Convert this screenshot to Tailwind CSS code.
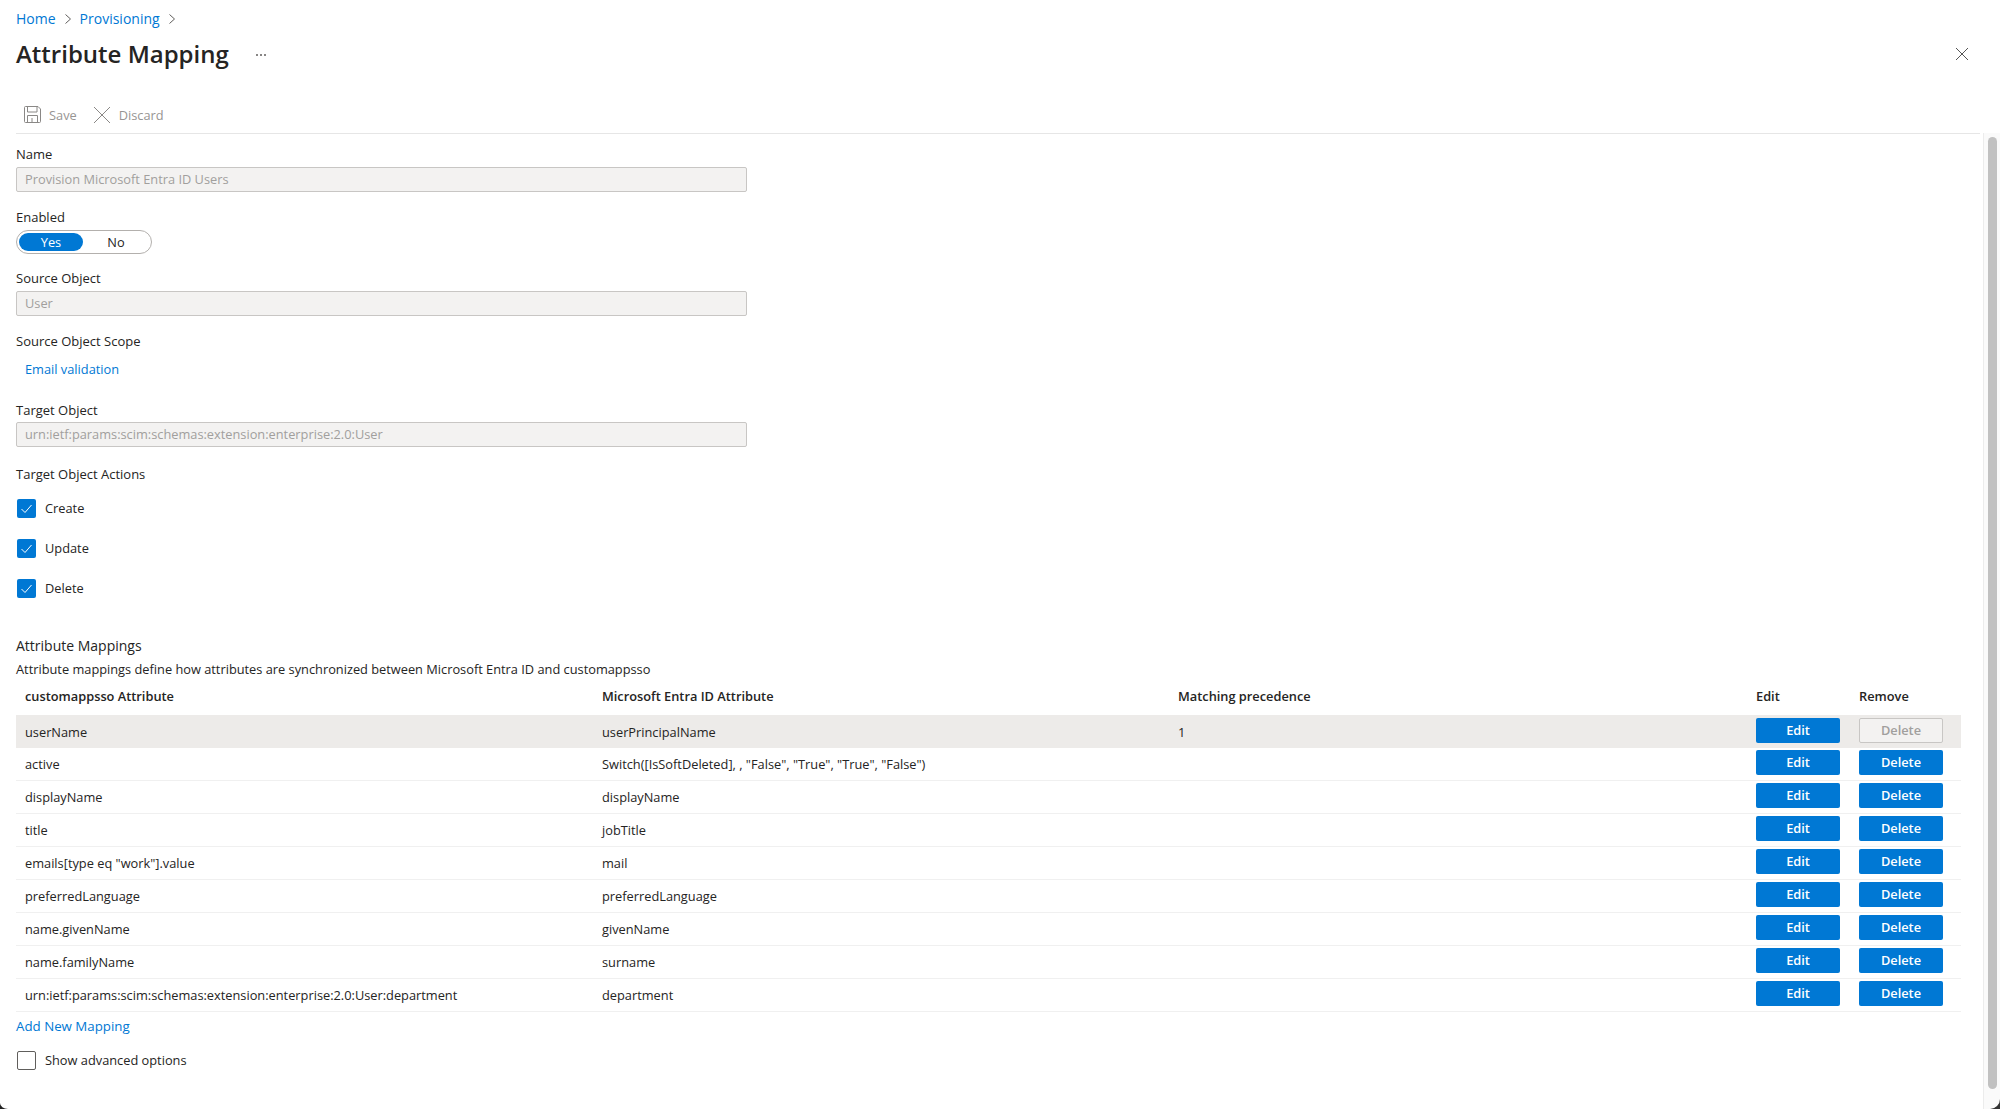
<!DOCTYPE html>
<html><head><meta charset="utf-8"><script src="https://cdn.jsdelivr.net/npm/@tailwindcss/browser@4"></script></head>
<body class="bg-white">
<div class="relative w-[2000px] h-[1109px] overflow-hidden bg-white text-[#252423] text-[12.8px] leading-[20px] font-['Open_Sans','Noto_Sans',sans-serif]">
  <div class="absolute right-0 top-[133px] bottom-0 w-[17px] bg-[#fafafa] border-l border-[#ececec]"><div class="absolute left-[4px] top-[4px] bottom-[20px] w-[9px] rounded-full bg-[#c1c1c1]"></div></div>
  <svg class="absolute right-0 bottom-0" width="12" height="12" viewBox="0 0 12 12"><path d="M12 2A10 10 0 0 1 2 12H12z" fill="#333"/></svg>
  <svg class="absolute left-0 bottom-0" width="8" height="6" viewBox="0 0 8 6"><path d="M0 0A8 6 0 0 0 8 6H0z" fill="#222"/></svg>
  <div class="px-4">
    <div class="flex items-center h-[20px] mt-[9px] text-[#0078d4] text-[14px]">
      <span>Home</span>
      <svg class="mx-[8px]" width="8" height="12" viewBox="0 0 8 12" fill="none" stroke="#605e5c"><path d="M1.5 1.5 6.5 6 1.5 10.500"/></svg>
      <span>Provisioning</span>
      <svg class="mx-[8px]" width="8" height="12" viewBox="0 0 8 12" fill="none" stroke="#605e5c"><path d="M1.5 1.5 6.5 6 1.500 10.500"/></svg>
    </div>
    <div class="flex items-center h-[34px] mt-[8px]">
      <h1 class="text-[24px] leading-[34px] font-semibold text-[#252423]">Attribute Mapping</h1>
      <span class="ml-[27px] flex gap-[2px] mt-[1px]"><i class="w-[2px] h-[2px] bg-[#605e5c] rounded-full"></i><i class="w-[2px] h-[2px] bg-[#605e5c] rounded-full"></i><i class="w-[2px] h-[2px] bg-[#605e5c] rounded-full"></i></span>
      <svg class="ml-auto mr-[15px]" width="14" height="14" viewBox="0 0 14 14" stroke="#555" stroke-width="1"><path d="M1 1 13 13M13 1 1 13"/></svg>
    </div>
  </div>
  <div class="ml-4 mr-[20px] mt-[27px] h-[36px] pt-[5px] pb-[7px] border-b border-[#e6e6e6] flex items-center text-[#979593]">
    <svg class="ml-[8px]" width="17" height="17" viewBox="0 0 17 17" fill="none" stroke="#8a8886"><path d="M.5 1.500a1 1 0 0 1 1-1h12.500l2.500 2.500v12.500a1 1 0 0 1-1 1h-14a1 1 0 0 1-1-1z"/><path d="M3.500.5v5.500h9.500v-5.500M3.500 16.500v-7h10v7M8 12v4.500"/></svg>
    <span class="ml-[8px]">Save</span>
    <svg class="ml-[16px]" width="18" height="18" viewBox="0 0 18 18" stroke="#8a8886"><path d="M1 1 17 17M17 1 1 17"/></svg>
    <span class="ml-[8px]">Discard</span>
  </div>
  <div class="px-4">
    <div class="mt-[10px] h-[20px] text-[13px]">Name</div>
    <div class="mt-[3px] w-[731px] h-[25px] rounded-[2px] border border-[#c8c6c4] bg-[#f3f2f1] px-[8px] text-[#a19f9d] leading-[23px]">Provision Microsoft Entra ID Users</div>
    <div class="mt-[15px] h-[20px] text-[13px]">Enabled</div>
    <div class="mt-[3px] w-[136px] h-[24px] rounded-full border border-[#b3b0ad] p-[2px] flex items-center">
      <span class="w-[64px] h-[18px] rounded-full bg-[#0078d4] text-white text-center leading-[18px]">Yes</span>
      <span class="w-[66px] text-center leading-[18px]">No</span>
    </div>
    <div class="mt-[14px] h-[20px] text-[13px]">Source Object</div>
    <div class="mt-[3px] w-[731px] h-[25px] rounded-[2px] border border-[#c8c6c4] bg-[#f3f2f1] px-[8px] text-[#a19f9d] leading-[23px]">User</div>
    <div class="mt-[15px] h-[20px] text-[13px]">Source Object Scope</div>
    <div class="mt-[8px] h-[20px] pl-[9px] text-[#0078d4]">Email validation</div>
    <div class="mt-[21px] h-[20px] text-[13px]">Target Object</div>
    <div class="mt-[2px] w-[731px] h-[25px] rounded-[2px] border border-[#c8c6c4] bg-[#f3f2f1] px-[8px] text-[#a19f9d] leading-[23px]">urn:ietf:params:scim:schemas:extension:enterprise:2.0:User</div>
    <div class="mt-[17px] h-[20px] text-[13px]">Target Object Actions</div>
    <div class="mt-[14px] h-[20px] flex items-center gap-[9px] pl-[1px]"><span class="w-[19px] h-[19px] mt-[1px] rounded-[2px] bg-[#0078d4] flex items-center justify-center"><svg width="13" height="13" viewBox="0 0 13 13" fill="none" stroke="#fff"><path d="M1.500 7 5 10.500 11.500 3"/></svg></span><span>Create</span></div>
    <div class="mt-[20px] h-[20px] flex items-center gap-[9px] pl-[1px]"><span class="w-[19px] h-[19px] mt-[1px] rounded-[2px] bg-[#0078d4] flex items-center justify-center"><svg width="13" height="13" viewBox="0 0 13 13" fill="none" stroke="#fff"><path d="M1.500 7 5 10.500 11.500 3"/></svg></span><span>Update</span></div>
    <div class="mt-[20px] h-[20px] flex items-center gap-[9px] pl-[1px]"><span class="w-[19px] h-[19px] mt-[1px] rounded-[2px] bg-[#0078d4] flex items-center justify-center"><svg width="13" height="13" viewBox="0 0 13 13" fill="none" stroke="#fff"><path d="M1.500 7 5 10.500 11.500 3"/></svg></span><span>Delete</span></div>
    <div class="mt-[38px] h-[20px] text-[14px]">Attribute Mappings</div>
    <div class="mt-[3px] h-[20px]">Attribute mappings define how attributes are synchronized between Microsoft Entra ID and customappsso</div>
    <div class="w-[1945px] mt-[7px]">
      <div class="grid grid-cols-[577px_576px_578px_103px_1fr] pl-[9px] h-[20px] font-semibold">
        <span>customappsso Attribute</span><span>Microsoft Entra ID Attribute</span><span>Matching precedence</span><span>Edit</span><span>Remove</span>
      </div>
      <div class="mt-[9px] grid grid-cols-[577px_576px_578px_103px_1fr] items-center pl-[9px] h-[33px] bg-[#edebe9]">
        <span>userName</span><span>userPrincipalName</span><span>1</span>
        <span class="w-[84px] h-[25px] -mt-[3px] rounded-[2px] bg-[#0078d4] text-white font-semibold text-center leading-[25px]">Edit</span>
        <span class="w-[84px] h-[25px] -mt-[3px] rounded-[2px] border border-[#c8c6c4] bg-[#f3f2f1] text-[#a19f9d] font-semibold text-center leading-[23px]">Delete</span>
      </div>
      <div class="grid grid-cols-[577px_576px_578px_103px_1fr] items-center pl-[9px] h-[33px] border-b border-[#f0f0f0]">
        <span>active</span><span>Switch([IsSoftDeleted], , "False", "True", "True", "False")</span><span></span>
        <span class="w-[84px] h-[25px] -mt-[3px] rounded-[2px] bg-[#0078d4] text-white font-semibold text-center leading-[25px]">Edit</span>
        <span class="w-[84px] h-[25px] -mt-[3px] rounded-[2px] bg-[#0078d4] text-white font-semibold text-center leading-[25px]">Delete</span>
      </div>
      <div class="grid grid-cols-[577px_576px_578px_103px_1fr] items-center pl-[9px] h-[33px] border-b border-[#f0f0f0]">
        <span>displayName</span><span>displayName</span><span></span>
        <span class="w-[84px] h-[25px] -mt-[3px] rounded-[2px] bg-[#0078d4] text-white font-semibold text-center leading-[25px]">Edit</span>
        <span class="w-[84px] h-[25px] -mt-[3px] rounded-[2px] bg-[#0078d4] text-white font-semibold text-center leading-[25px]">Delete</span>
      </div>
      <div class="grid grid-cols-[577px_576px_578px_103px_1fr] items-center pl-[9px] h-[33px] border-b border-[#f0f0f0]">
        <span>title</span><span>jobTitle</span><span></span>
        <span class="w-[84px] h-[25px] -mt-[3px] rounded-[2px] bg-[#0078d4] text-white font-semibold text-center leading-[25px]">Edit</span>
        <span class="w-[84px] h-[25px] -mt-[3px] rounded-[2px] bg-[#0078d4] text-white font-semibold text-center leading-[25px]">Delete</span>
      </div>
      <div class="grid grid-cols-[577px_576px_578px_103px_1fr] items-center pl-[9px] h-[33px] border-b border-[#f0f0f0]">
        <span>emails[type eq "work"].value</span><span>mail</span><span></span>
        <span class="w-[84px] h-[25px] -mt-[3px] rounded-[2px] bg-[#0078d4] text-white font-semibold text-center leading-[25px]">Edit</span>
        <span class="w-[84px] h-[25px] -mt-[3px] rounded-[2px] bg-[#0078d4] text-white font-semibold text-center leading-[25px]">Delete</span>
      </div>
      <div class="grid grid-cols-[577px_576px_578px_103px_1fr] items-center pl-[9px] h-[33px] border-b border-[#f0f0f0]">
        <span>preferredLanguage</span><span>preferredLanguage</span><span></span>
        <span class="w-[84px] h-[25px] -mt-[3px] rounded-[2px] bg-[#0078d4] text-white font-semibold text-center leading-[25px]">Edit</span>
        <span class="w-[84px] h-[25px] -mt-[3px] rounded-[2px] bg-[#0078d4] text-white font-semibold text-center leading-[25px]">Delete</span>
      </div>
      <div class="grid grid-cols-[577px_576px_578px_103px_1fr] items-center pl-[9px] h-[33px] border-b border-[#f0f0f0]">
        <span>name.givenName</span><span>givenName</span><span></span>
        <span class="w-[84px] h-[25px] -mt-[3px] rounded-[2px] bg-[#0078d4] text-white font-semibold text-center leading-[25px]">Edit</span>
        <span class="w-[84px] h-[25px] -mt-[3px] rounded-[2px] bg-[#0078d4] text-white font-semibold text-center leading-[25px]">Delete</span>
      </div>
      <div class="grid grid-cols-[577px_576px_578px_103px_1fr] items-center pl-[9px] h-[33px] border-b border-[#f0f0f0]">
        <span>name.familyName</span><span>surname</span><span></span>
        <span class="w-[84px] h-[25px] -mt-[3px] rounded-[2px] bg-[#0078d4] text-white font-semibold text-center leading-[25px]">Edit</span>
        <span class="w-[84px] h-[25px] -mt-[3px] rounded-[2px] bg-[#0078d4] text-white font-semibold text-center leading-[25px]">Delete</span>
      </div>
      <div class="grid grid-cols-[577px_576px_578px_103px_1fr] items-center pl-[9px] h-[33px] border-b border-[#f0f0f0]">
        <span>urn:ietf:params:scim:schemas:extension:enterprise:2.0:User:department</span><span>department</span><span></span>
        <span class="w-[84px] h-[25px] -mt-[3px] rounded-[2px] bg-[#0078d4] text-white font-semibold text-center leading-[25px]">Edit</span>
        <span class="w-[84px] h-[25px] -mt-[3px] rounded-[2px] bg-[#0078d4] text-white font-semibold text-center leading-[25px]">Delete</span>
      </div>
    </div>
    <div class="mt-[4px] h-[20px] text-[#0078d4] text-[13.300px]">Add New Mapping</div>
    <div class="mt-[14px] h-[20px] flex items-center gap-[9px] pl-[1px]"><span class="w-[19px] h-[19px] mt-[1px] rounded-[2px] border border-[#605e5c]"></span><span>Show advanced options</span></div>
  </div>
</div>
</body></html>
